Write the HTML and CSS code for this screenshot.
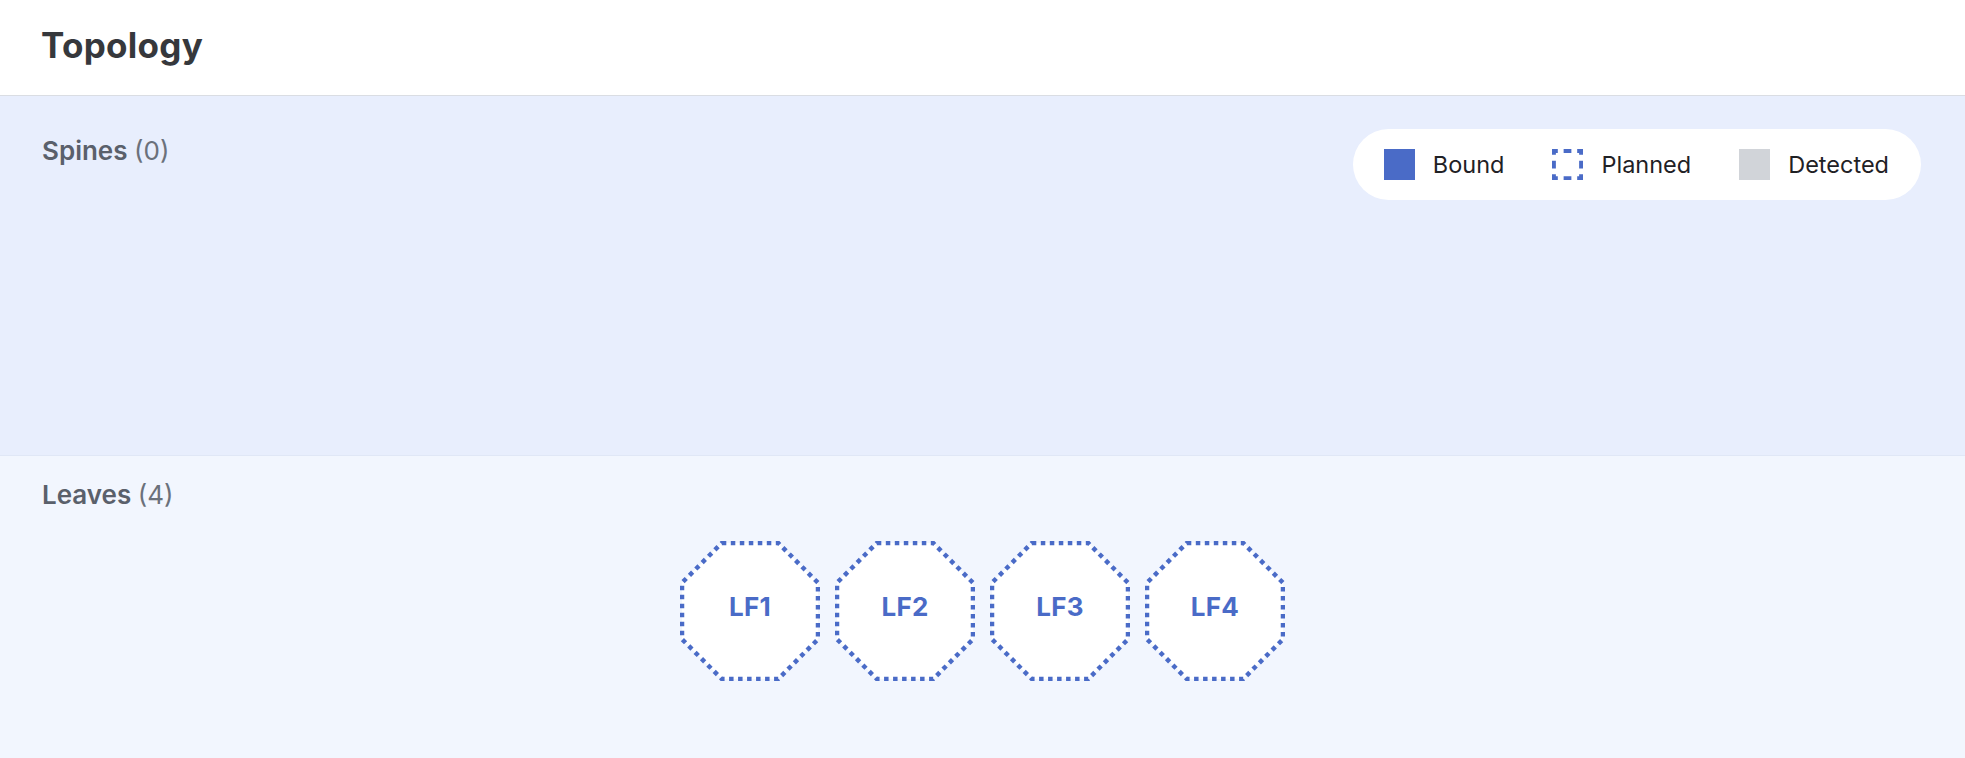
FILE: index.html
```html
<!DOCTYPE html>
<html lang="en">
<head>
  <meta charset="UTF-8" />
  <meta name="viewport" content="width=device-width, initial-scale=1.0"/>
  <title>Topology</title>
  <link rel="stylesheet" href="styles.css">
</head>
<body>
  <header class="topbar">
    <h1>Topology</h1>
  </header>

  <section class="tier spines">
    <div class="tier-head">
      <h2>Spines <span class="count">(0)</span></h2>
      <ul class="legend">
        <li><span class="swatch bound"></span>Bound</li>
        <li>
          <svg class="swatch" viewBox="0 0 32 32" width="31" height="31"><rect class="planned-box" x="2" y="2" width="28" height="28"/></svg>
          Planned
        </li>
        <li><span class="swatch detected"></span>Detected</li>
      </ul>
    </div>
  </section>

  <section class="tier leaves">
    <h2>Leaves <span class="count">(4)</span></h2>
    <div class="nodes">
      <div class="node">
        <svg viewBox="0 0 140 140" width="140" height="140"><polygon points="41.8,2 98.2,2 138,41.8 138,98.2 98.2,138 41.8,138 2,98.2 2,41.8"/></svg>
        <span>LF1</span>
      </div>
      <div class="node">
        <svg viewBox="0 0 140 140" width="140" height="140"><polygon points="41.8,2 98.2,2 138,41.8 138,98.2 98.2,138 41.8,138 2,98.2 2,41.8"/></svg>
        <span>LF2</span>
      </div>
      <div class="node">
        <svg viewBox="0 0 140 140" width="140" height="140"><polygon points="41.8,2 98.2,2 138,41.8 138,98.2 98.2,138 41.8,138 2,98.2 2,41.8"/></svg>
        <span>LF3</span>
      </div>
      <div class="node">
        <svg viewBox="0 0 140 140" width="140" height="140"><polygon points="41.8,2 98.2,2 138,41.8 138,98.2 98.2,138 41.8,138 2,98.2 2,41.8"/></svg>
        <span>LF4</span>
      </div>
    </div>
  </section>
</body>
</html>
```

FILE: styles.css
```css
body {
  margin: 0;
  font-family: 'Inter', 'Noto Sans', sans-serif;
  background-color: #f2f6fe;
}
.topbar {
  height: 95px;
  background-color: #ffffff;
  border-bottom: 1px solid #dadde3;
  padding: 0 41px;
  box-sizing: content-box;
}
.topbar h1 {
  margin: 0;
  padding-top: 25px;
  font-size: 35px;
  line-height: 41px;
  font-weight: 700;
  letter-spacing: 0.3px;
  color: #36383c;
}
.tier h2 {
  margin: 0;
  font-size: 26px;
  line-height: 32px;
  font-weight: 600;
  color: #5a606b;
}
.tier h2 .count {
  font-weight: 400;
  color: #6b717b;
}
.spines {
  height: 360px;
  box-sizing: border-box;
  padding: 33px 44px 0 42px;
  background-color: #e8eefd;
  border-bottom: 1px solid #e0e7f6;
}
.tier-head {
  display: flex;
  justify-content: space-between;
  align-items: flex-start;
}
.tier-head h2 {
  margin-top: 6px;
}
.legend {
  list-style: none;
  margin: 0;
  padding: 0 32px 0 31px;
  height: 71px;
  display: flex;
  align-items: center;
  gap: 48px;
  background-color: #ffffff;
  border-radius: 36px;
}
.legend li {
  display: flex;
  align-items: center;
  gap: 18px;
  font-size: 23.5px;
  color: #1f2125;
}
.swatch {
  width: 31px;
  height: 31px;
  box-sizing: border-box;
  flex-shrink: 0;
}
.swatch.bound {
  background-color: #4a6bc7;
}
.planned-box {
  fill: none;
  stroke: #4a6bc7;
  stroke-width: 4;
  stroke-dasharray: 8 6;
  stroke-dashoffset: 4;
}
.swatch.detected {
  background-color: #d1d4d9;
}
.leaves {
  padding: 23px 42px 60px;
  background-color: #f2f6fe;
}
.nodes {
  display: flex;
  justify-content: center;
  gap: 15px;
  margin-top: 30px;
}
.node {
  display: grid;
  place-items: center;
  width: 140px;
  height: 140px;
}
.node svg,
.node span {
  grid-area: 1 / 1;
}
.node polygon {
  fill: #ffffff;
  stroke: #4a6bc7;
  stroke-width: 4.5;
  stroke-dasharray: 4.5 4.5;
}
.node span {
  font-size: 26px;
  font-weight: 700;
  color: #4a6bc7;
  letter-spacing: 0.3px;
  padding-bottom: 10px;
}
```
